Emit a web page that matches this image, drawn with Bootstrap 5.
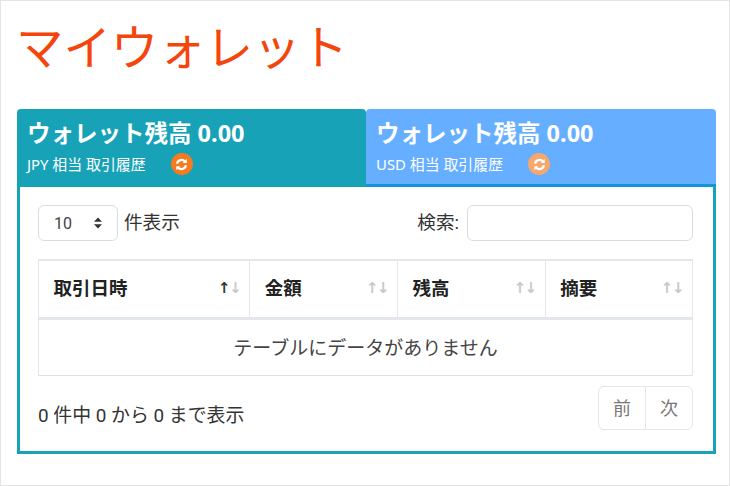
<!DOCTYPE html>
<html lang="ja">
<head>
<meta charset="utf-8">
<title>マイウォレット</title>
<link href="https://cdn.jsdelivr.net/npm/bootstrap@5.3.0/dist/css/bootstrap.min.css" rel="stylesheet">
<style>
html,body{height:486px;overflow:hidden;background:#fff}
body{font-family:"Roboto","Noto Sans CJK JP",sans-serif;color:#212529}
.page-frame{height:486px;border:1px solid #e4e4e4;padding:0 13px 0 16px}
.page-title{font-family:"Noto Sans CJK JP",sans-serif;font-size:47.5px;font-weight:400;color:#f4450c;line-height:60px;margin:14px 0 34px -1px;letter-spacing:-.1px;white-space:nowrap}
.wallet-tabs{height:78px}
.wallet-tab{padding:8px 10px;color:#fff;border-radius:4px 4px 0 0;min-width:0}
.tab-jpy{flex:0 0 349px;background:#17a2b8}
.tab-usd{flex:1 1 auto;background:#66aeff;border-bottom:3px solid #0e96d8}
.tab-amount{font-size:23.5px;font-weight:700;line-height:32px;margin:0;white-space:nowrap;font-family:"Noto Sans","Noto Sans CJK JP",sans-serif}
.tab-sub{font-size:14.9px;line-height:22px;margin-top:4px;white-space:nowrap;font-family:"Noto Sans","Noto Sans CJK JP",sans-serif}
.refresh-dot{width:22px;height:22px;border-radius:50%;background:#f47b20;margin-left:25px;flex:none}
.tab-usd .refresh-dot{background:#f5a76c}
.wallet-panel{border:3px solid #17a2b8;border-top:0;height:267px;padding:18px 20px 0 18px}
.len-select{width:80px;height:36px;font-size:16px;padding:6px 10px 6px 15px;border-color:#d8dde3;color:#444;background-size:8px 12px;background-position:right 15px center;background-image:url("data:image/svg+xml,%3Csvg xmlns='http://www.w3.org/2000/svg' viewBox='0 0 10 14'%3E%3Cpath d='M5 0l5 5.500H0zM5 14L0 8.500h10z' fill='%23333'/%3E%3C/svg%3E")}
.ctl-label{font-size:18.6px;color:#333;line-height:24px}
.len-wrap{gap:6px}
.search-input{width:226px;height:36px;border-color:#d8dde3}
.wallet-table{margin:18px 0 0;height:115px;table-layout:fixed}
.wallet-table th{height:58px;padding:3px 14.500px 0;vertical-align:middle;font-weight:700;font-size:18.500px;border-width:2px 1px 3px;border-color:#e3e6ea;color:#222;position:relative}
.wallet-table td{text-align:center;vertical-align:middle;padding:4px 0 0;font-size:19px;color:#444;border-color:#e3e6ea;height:57px}
.sort-arrows{position:absolute;right:9px;top:17px;font-size:15px;line-height:20px;color:#c5c9ce;font-family:"DejaVu Sans",sans-serif;letter-spacing:-1.500px}
.sort-arrows .is-on{color:#333}
.foot-info{font-size:18.9px;color:#333;margin-top:10px}
.pager{margin:10px 0 0}
.pager .page-link{font-size:18px;color:#777;padding:0;width:48px;height:44px;line-height:44px;text-align:center;border-color:#e3e6ea;background:#fff}
</style>
</head>
<body>
<div class="page-frame">
  <h1 class="page-title">マイウォレット</h1>
  <div class="d-flex wallet-tabs">
    <div class="wallet-tab tab-jpy">
      <p class="tab-amount">ウォレット残高 0.00</p>
      <div class="tab-sub d-flex align-items-center">JPY 相当 取引履歴
        <span class="refresh-dot d-flex align-items-center justify-content-center">
          <svg width="13" height="13" viewBox="0 0 16 16" fill="none" stroke="#fff" stroke-width="2.8"><path d="M2.5 7a5.6 5.6 0 0 1 9.8-2.6"/><path d="M13.5 9a5.6 5.6 0 0 1-9.8 2.6"/><path d="M14.5 1v5h-5z" fill="#fff" stroke="none"/><path d="M1.500 15v-5h5z" fill="#fff" stroke="none"/></svg>
        </span>
      </div>
    </div>
    <div class="wallet-tab tab-usd">
      <p class="tab-amount">ウォレット残高 0.00</p>
      <div class="tab-sub d-flex align-items-center">USD 相当 取引履歴
        <span class="refresh-dot d-flex align-items-center justify-content-center">
          <svg width="13" height="13" viewBox="0 0 16 16" fill="none" stroke="#fff" stroke-width="2.8"><path d="M2.5 7a5.6 5.6 0 0 1 9.8-2.6"/><path d="M13.5 9a5.6 5.6 0 0 1-9.8 2.6"/><path d="M14.5 1v5h-5z" fill="#fff" stroke="none"/><path d="M1.500 15v-5h5z" fill="#fff" stroke="none"/></svg>
        </span>
      </div>
    </div>
  </div>
  <div class="wallet-panel bg-white">
    <div class="d-flex justify-content-between align-items-center">
      <div class="d-flex align-items-center len-wrap">
        <select class="form-select len-select"><option>10</option></select>
        <span class="ctl-label">件表示</span>
      </div>
      <div class="d-flex align-items-center gap-2">
        <label class="ctl-label">検索:</label>
        <input class="form-control search-input" type="search">
      </div>
    </div>
    <table class="table table-bordered wallet-table">
      <colgroup><col style="width:32.3%"><col style="width:22.6%"><col style="width:22.6%"><col style="width:22.5%"></colgroup>
      <thead>
        <tr>
          <th>取引日時<span class="sort-arrows"><span class="is-on">↑</span>↓</span></th>
          <th>金額<span class="sort-arrows">↑↓</span></th>
          <th>残高<span class="sort-arrows">↑↓</span></th>
          <th>摘要<span class="sort-arrows">↑↓</span></th>
        </tr>
      </thead>
      <tbody>
        <tr><td colspan="4">テーブルにデータがありません</td></tr>
      </tbody>
    </table>
    <div class="d-flex justify-content-between align-items-start">
      <div class="foot-info pt-3">0 件中 0 から 0 まで表示</div>
      <ul class="pagination pager">
        <li class="page-item disabled"><a class="page-link" href="#">前</a></li>
        <li class="page-item disabled"><a class="page-link" href="#">次</a></li>
      </ul>
    </div>
  </div>
</div>
<script src="https://cdn.jsdelivr.net/npm/bootstrap@5.3.0/dist/js/bootstrap.bundle.min.js"></script>
</body>
</html>
